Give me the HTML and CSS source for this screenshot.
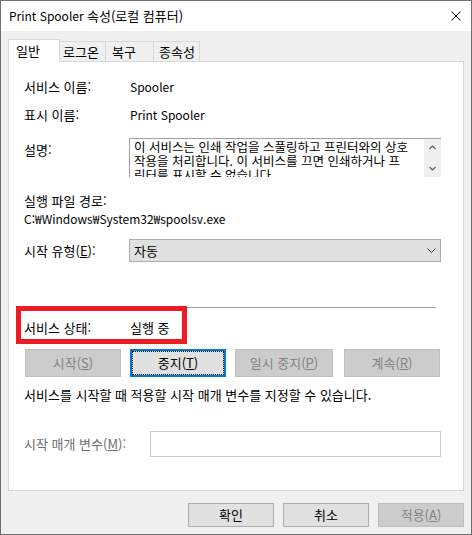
FILE: index.html
```html
<!DOCTYPE html>
<html lang="ko">
<head>
<meta charset="utf-8">
<title>Print Spooler 속성(로컬 컴퓨터)</title>
<link rel="stylesheet" href="styles.css">
</head>
<body>
<div class="window">
  <div class="titlebar">
    <span class="title"><span class="latin">Print Spooler </span>속성(로컬 컴퓨터)</span>
    <svg class="close" width="10" height="10" viewBox="0 0 10 10"><path d="M0.5 0.5 L9.5 9.5 M9.5 0.5 L0.5 9.5" stroke="#000" stroke-width="1" fill="none"/></svg>
  </div>
  <div class="dialog">
    <div class="tabs">
      <div class="tab active t1">일반</div>
      <div class="tab t2">로그온</div>
      <div class="tab t3">복구</div>
      <div class="tab t4">종속성</div>
      <div class="tabs-fill"></div>
    </div>
    <div class="panel">
      <div class="row">
        <div class="label">서비스 이름:</div>
        <div class="value latin">Spooler</div>
      </div>
      <div class="row m12">
        <div class="label">표시 이름:</div>
        <div class="value latin">Print Spooler</div>
      </div>
      <div class="row desc-row">
        <div class="label desc-label">설명:</div>
        <div class="desc">
          <div class="desc-text">이 서비스는 인쇄 작업을 스풀링하고 프린터와의 상호<br>작용을 처리합니다. 이 서비스를 끄면 인쇄하거나 프<br>린터를 표시할 수 없습니다.</div>
          <div class="scrollbar">
            <div class="sb-btn"><svg width="7" height="5" viewBox="0 0 7 5"><path d="M0.5 4 L3.5 1 L6.5 4" stroke="#606060" stroke-width="1.2" fill="none"/></svg></div>
            <div class="sb-btn"><svg width="7" height="5" viewBox="0 0 7 5"><path d="M0.5 1 L3.5 4 L6.5 1" stroke="#606060" stroke-width="1.2" fill="none"/></svg></div>
          </div>
        </div>
      </div>
      <div class="line path-label">실행 파일 경로:</div>
      <div class="line path latin">C:₩Windows₩System32₩spoolsv.exe</div>
      <div class="row start-row">
        <div class="label">시작 유형(<u>E</u>):</div>
        <div class="select">
          <span>자동</span>
          <svg width="9" height="5" viewBox="0 0 9 5"><path d="M0.5 0.5 L4.5 4.5 L8.5 0.5" stroke="#333" stroke-width="1" fill="none"/></svg>
        </div>
      </div>
      <div class="sep"></div>
      <div class="row status-row">
        <div class="label">서비스 상태:</div>
        <div class="value">실행 중</div>
      </div>
      <div class="btn-row">
        <div class="btn disabled b-start">시작(<u>S</u>)</div>
        <div class="btn focused">중지(<u>T</u>)</div>
        <div class="btn disabled b-pause">일시 중지(<u>P</u>)</div>
        <div class="btn disabled b-resume">계속(<u>R</u>)</div>
      </div>
      <div class="line hint">서비스를 시작할 때 적용할 시작 매개 변수를 지정할 수 있습니다.</div>
      <div class="row param-row">
        <div class="label param-label">시작 매개 변수(<u>M</u>):</div>
        <div class="param-input"></div>
      </div>
      <div class="highlight"></div>
    </div>
    <div class="footer">
      <div class="btn fbtn">확인</div>
      <div class="btn fbtn">취소</div>
      <div class="btn fbtn disabled">적용(<u>A</u>)</div>
    </div>
  </div>
</div>
</body>
</html>
```

FILE: styles.css
```css
html, body {
  margin: 0;
  padding: 0;
}
body {
  font-family: "Noto Sans CJK KR", "Noto Sans", sans-serif;
  font-size: 13px;
  color: #000;
  line-height: 16px;
}
.latin {
  font-size: 12px;
}
u {
  text-decoration: underline;
  text-underline-offset: 1px;
}
.window {
  width: 472px;
  height: 535px;
  box-sizing: border-box;
  border: 1px solid #707070;
  display: flex;
  flex-direction: column;
  background: #f0f0f0;
}
.titlebar {
  height: 30px;
  flex: none;
  background: #fff;
  display: flex;
  align-items: center;
  justify-content: space-between;
  padding: 0 10px 0 8px;
}
.title {
  line-height: 16px;
  white-space: nowrap;
}
.close {
  display: block;
}
.dialog {
  flex: 1;
  padding: 8px 7px 0 7px;
  display: flex;
  flex-direction: column;
}
.tabs {
  display: flex;
  align-items: flex-end;
  height: 23px;
  flex: none;
}
.tab {
  box-sizing: border-box;
  height: 21px;
  border: 1px solid #d9d9d9;
  border-left: none;
  background: #f0f0f0;
  display: flex;
  align-items: center;
  padding-left: 4px;
  white-space: nowrap;
}
.tab.active {
  height: 23px;
  background: #fff;
  border-left: 1px solid #d9d9d9;
  border-bottom: none;
  padding-left: 7px;
}
.t1 { width: 52px; }
.t2 { width: 46px; padding-left: 3px; }
.t3 { width: 48px; padding-left: 6px; }
.t4 { width: 46px; padding-left: 5px; }
.tabs-fill {
  flex: 1;
  height: 1px;
  background: #d9d9d9;
}
.panel {
  box-sizing: border-box;
  height: 429px;
  flex: none;
  border: 1px solid #d9d9d9;
  border-top: none;
  background: #fff;
  padding: 17px 20px 0 15px;
  position: relative;
}
.row {
  display: flex;
  align-items: center;
}
.m12 { margin-top: 12px; }
.label {
  width: 105px;
  flex: none;
  white-space: nowrap;
}
.value {
  padding-left: 1px;
  white-space: nowrap;
}
.desc-row {
  margin-top: 15px;
  align-items: flex-start;
}
.desc-label {
  margin-top: 4px;
}
.desc {
  width: 312px;
  height: 39px;
  box-sizing: border-box;
  border-top: 1px solid #a0a0a0;
  border-left: 1px solid #a0a0a0;
  display: flex;
  overflow: hidden;
}
.desc-text {
  flex: 1;
  padding: 1px 0 0 4px;
  font-size: 12.5px;
  line-height: 14px;
  white-space: nowrap;
  overflow: hidden;
}
.scrollbar {
  width: 17px;
  flex: none;
  background: #f0f0f0;
  display: flex;
  flex-direction: column;
  justify-content: space-between;
}
.sb-btn {
  height: 17px;
  display: flex;
  align-items: center;
  justify-content: center;
}
.sb-btn svg { display: block; }
.line {
  white-space: nowrap;
}
.path-label { margin-top: 16px; }
.path { margin-top: 2px; line-height: 16px; }
.start-row { margin-top: 12px; }
.select {
  width: 312px;
  height: 23px;
  box-sizing: border-box;
  background: #e1e1e1;
  border: 1px solid #adadad;
  display: flex;
  align-items: center;
  justify-content: space-between;
  padding: 0 4px 0 4px;
}
.select svg { display: block; }
.sep {
  margin-top: 45px;
  width: 412px;
  height: 1px;
  background: #a0a0a0;
}
.status-row { margin-top: 12px; }
.btn-row {
  margin-top: 13px;
  display: flex;
  gap: 9px;
  padding-left: 1px;
}
.btn {
  box-sizing: border-box;
  width: 96px;
  height: 28px;
  background: #e1e1e1;
  border: 1px solid #adadad;
  display: flex;
  align-items: center;
  justify-content: center;
  white-space: nowrap;
}
.btn.disabled {
  background: #cccccc;
  border-color: #bfbfbf;
  color: #838383;
}
.btn.focused {
  border: 2px solid #0078d7;
  outline: 1px dotted #000;
  outline-offset: -3px;
}
.b-pause { width: 98px; }
.b-resume { margin-left: 2px; }
.hint { margin-top: 10px; }
.param-row { margin-top: 28px; }
.param-label {
  width: 126px;
  color: #6d6d6d;
}
.param-input {
  width: 291px;
  height: 26px;
  box-sizing: border-box;
  border: 1px solid #cccccc;
  background: #fff;
}
.highlight {
  position: absolute;
  left: 7px;
  top: 244px;
  width: 171px;
  height: 38px;
  box-sizing: border-box;
  border: 5px solid #ed1c24;
}
.footer {
  margin-top: 12px;
  display: flex;
  justify-content: flex-end;
  gap: 9px;
}
.fbtn {
  width: 86px;
  height: 24px;
}
```
